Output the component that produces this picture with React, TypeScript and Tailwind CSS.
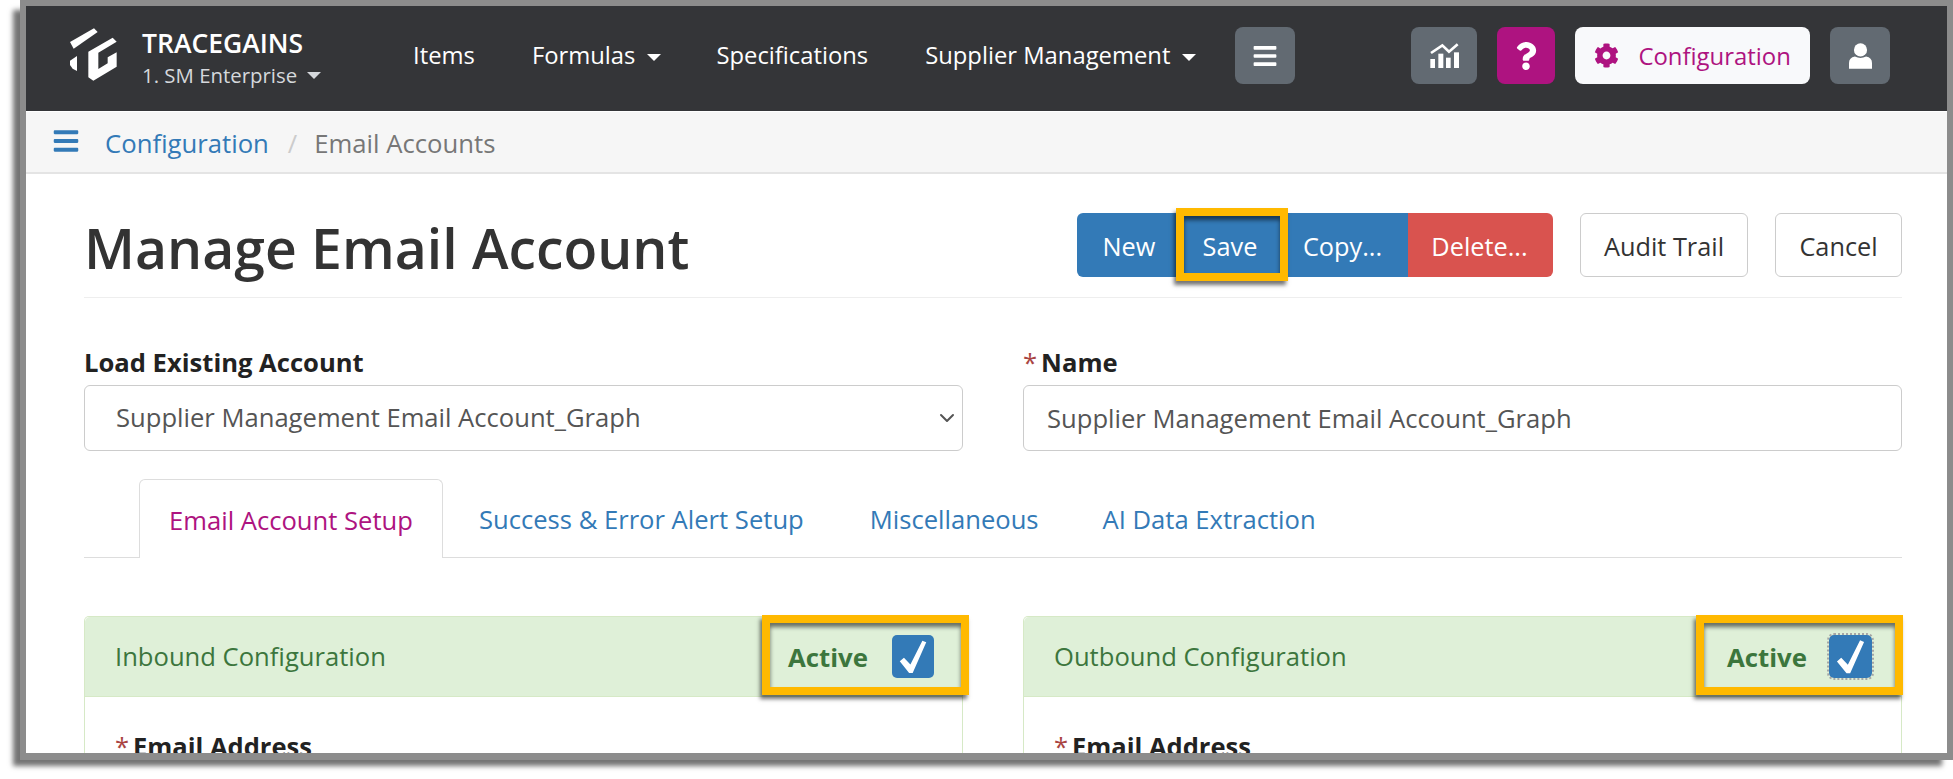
import React from 'react';
import { FaBars, FaCog, FaQuestion } from 'react-icons/fa';
import { ChevronDown } from 'lucide-react';

const Caret = ({ className }: { className?: string }) => (
  <span className={`inline-block w-0 h-0 border-x-[7px] border-x-transparent border-t-[7px] ${className}`} />
);

const Logo = () => (
  <svg viewBox="0 0 210 210" className="w-[70px] h-[70px] shrink-0 mb-[7px]" fill="#fff">
    <path d="M30 66 L102 25 L113 36 L41 86 Z" />
    <path d="M30 122 L51 108 L51 153 L38 146 L30 135 Z" />
    <path d="M85 95 L158 53 L170 65 L115 98 L115 147 L143 130 L143 112 L170 97 L170 140 L100 182 L85 172 Z" />
  </svg>
);

const ChartIcon = () => (
  <svg viewBox="0 0 87 75" className="w-[29px] h-[25px]" fill="#fff">
    <path d="M3 30 L37 7 L57 26 L83 4" fill="none" stroke="#fff" strokeWidth="8" />
    <rect x="1" y="48" width="14" height="27" />
    <rect x="25" y="32" width="15" height="43" />
    <rect x="48" y="44" width="14" height="31" />
    <rect x="72" y="28" width="15" height="47" />
  </svg>
);

const UserIcon = () => (
  <svg viewBox="0 0 70 77" className="w-[23px] h-[26px]" fill="#fff">
    <circle cx="35" cy="20" r="20" />
    <path d="M0 77 V60 Q0 43 18 40 Q35 49 52 40 Q70 43 70 60 V77 Z" />
  </svg>
);

const Check = () => (
  <svg viewBox="0 0 130 130" className="w-full h-full" fill="#fff">
    <path d="M24 80 L37 69 L57 90 L94 16 L106 21 L64 116 L53 116 Z" />
  </svg>
);

const Highlight = ({ className }: { className?: string }) => (
  <div className={`absolute border-8 border-[#ffb900] shadow-[-2px_4px_4px_rgba(0,0,0,0.55),inset_0_4px_4px_rgba(0,0,0,0.55)] pointer-events-none ${className}`} />
);

const NavLink = ({ label, caret, className }: { label: string; caret?: boolean; className?: string }) => (
  <a className={`flex items-center text-white text-[23.8px] mb-[5px] ${className}`}>
    {label}
    {caret && <Caret className="ml-[12px] mt-[3px] border-t-white" />}
  </a>
);

const Panel = ({ title, outlined, activeClass, boxClass }: { title: string; outlined?: boolean; activeClass: string; boxClass: string }) => (
  <div className="border border-[#d6e9c6] border-b-0 rounded-t-[5px] h-[200px]">
    <div className="flex items-center justify-between h-[80px] bg-[#dff0d8] border-b border-[#d6e9c6] rounded-t-[5px] pl-[30px] text-[#3c763d]">
      <span className="text-[25.6px] pt-[1px]">{title}</span>
      <div className={`relative flex items-center h-[80px] ${activeClass}`}>
        <span className="text-[25.8px] font-bold pt-[1px]">Active</span>
        <span className={`h-[43px] bg-[#337ab7] rounded-[5px] ${boxClass} ${outlined ? 'outline-2 outline-dotted outline-[#a5a5a5]' : ''}`}>
          <Check />
        </span>
        <Highlight className={`top-[-2px] bottom-[2px] ${outlined ? 'left-[-31px] right-[-2px]' : 'left-[-26px] right-[-7px]'}`} />
      </div>
    </div>
    <div className="pl-[30px] pt-[30px] text-[25.5px] font-bold text-[#222]">
      <span className="text-[#a94442] font-normal mr-[4px]">*</span>Email Address
    </div>
  </div>
);

export default function App() {
  return (
    <div className="w-[1953px] h-[779px] bg-white overflow-hidden pl-[20px] font-['Open_Sans','Noto_Sans',sans-serif]">
      <div className="h-[760px] border-[#8c8c8c] border-l-[6px] border-t-[6px] border-r-[6px] border-b-[7px] shadow-[-9px_8px_5px_-2px_rgba(0,0,0,0.55)] bg-white overflow-hidden">
        {/* top bar */}
        <header className="flex items-center h-[105px] bg-[#343538] pl-[34px]">
          <Logo />
          <div className="w-[271px] ml-[12px] shrink-0">
            <div className="text-white text-[26.5px] font-semibold leading-[32px]">TRACEGAINS</div>
            <div className="flex items-center text-[#d5d8dc] text-[20.4px] leading-[32px]">
              1. SM Enterprise
              <Caret className="ml-[10px] mt-[2px] border-t-[#d5d8dc]" />
            </div>
          </div>
          <NavLink label="Items" />
          <NavLink label="Formulas" caret className="ml-[57px]" />
          <NavLink label="Specifications" className="ml-[55px]" />
          <NavLink label="Supplier Management" caret className="ml-[57px]" />
          <button className="flex items-center justify-center w-[60px] h-[57px] ml-[39px] mb-[6px] bg-[#626a72] rounded-[8px] text-white">
            <FaBars size={26} />
          </button>
          <button className="flex items-center justify-center w-[66px] h-[57px] ml-[116px] mb-[6px] bg-[#626a72] rounded-[8px]">
            <ChartIcon />
          </button>
          <button className="flex items-center justify-center w-[58px] h-[57px] ml-[20px] mb-[6px] bg-[#ae1380] rounded-[8px] text-white">
            <FaQuestion size={28} />
          </button>
          <button className="flex items-center w-[235px] h-[57px] ml-[20px] mb-[6px] pl-[19px] bg-[#f8f9fb] rounded-[8px] text-[#ae1380] text-[23.9px]">
            <FaCog size={25} />
            <span className="ml-[19px]">Configuration</span>
          </button>
          <button className="flex items-center justify-center w-[60px] h-[57px] ml-[20px] mb-[6px] bg-[#626a72] rounded-[8px]">
            <UserIcon />
          </button>
        </header>

        {/* breadcrumb */}
        <nav className="flex items-center h-[62px] mt-px bg-[#f6f6f6] border-b-2 border-[#e4e4e4] pl-[26px] text-[25.7px]">
          <FaBars size={28} className="text-[#337ab7] mb-[2px]" />
          <a className="ml-[25px] pt-[5px] text-[#337ab7]">Configuration</a>
          <span className="ml-[19px] pt-[5px] text-[#ccc]">/</span>
          <span className="ml-[17px] pt-[5px] text-[#777]">Email Accounts</span>
        </nav>

        <main className="pl-[58px] pr-[45px]">
          {/* title row */}
          <div className="flex items-center justify-between pt-[39px] pb-[20px] border-b border-[#eee]">
            <h1 className="h-[64px] text-[55.3px] font-semibold leading-[64px] pt-[3px] text-[#333]">Manage Email Account</h1>
            <div className="flex items-center text-[25.3px]">
              <div className="flex h-[64px] text-white">
                <button className="w-[104px] pt-[4px] bg-[#337ab7] rounded-l-[6px]">New</button>
                <button className="relative w-[102px] pt-[4px] pr-[4px] bg-[#337ab7]">
                  Save
                  <Highlight className="inset-x-[-5px] top-[-5px] bottom-[-4px]" />
                </button>
                <button className="w-[125px] pt-[4px] pr-[6px] bg-[#337ab7]">Copy...</button>
                <button className="w-[145px] pt-[4px] pr-[2px] bg-[#d9534f] rounded-r-[6px]">Delete...</button>
              </div>
              <button className="w-[168px] h-[64px] ml-[27px] pt-[4px] bg-white border border-[#ccc] rounded-[6px] text-[#333]">Audit Trail</button>
              <button className="w-[127px] h-[64px] ml-[27px] pt-[4px] bg-white border border-[#ccc] rounded-[6px] text-[#333]">Cancel</button>
            </div>
          </div>

          {/* account and name */}
          <div className="grid grid-cols-2 gap-x-[60px] mt-[49px] text-[25.6px]">
            <div>
              <label className="block font-bold leading-[32px] text-[#222] mb-[6px]">Load Existing Account</label>
              <div className="relative">
                <select defaultValue="a" className="w-full h-[66px] appearance-none bg-white border border-[#ccc] rounded-[6px] pl-[31px] text-[#555]">
                  <option value="a">Supplier Management Email Account_Graph</option>
                </select>
                <ChevronDown size={24} className="absolute right-[4px] top-[21px] text-[#555]" />
              </div>
            </div>
            <div>
              <label className="block font-bold leading-[32px] text-[#222] mb-[6px]">
                <span className="text-[#a94442] font-normal mr-[4px]">*</span>Name
              </label>
              <input readOnly value="Supplier Management Email Account_Graph" className="w-full h-[66px] bg-white border border-[#ccc] rounded-[6px] pl-[23px] text-[#555]" />
            </div>
          </div>

          {/* tabs */}
          <div className="flex h-[79px] mt-[28px] pl-[55px] border-b border-[#ddd] text-[25.6px]">
            <a className="flex items-center justify-center w-[304px] h-[79px] pt-[4px] bg-white border border-b-0 border-[#ddd] rounded-t-[6px] text-[#ae1380]">Email Account Setup</a>
            <a className="flex items-center ml-[36px] pt-[4px] text-[#337ab7]">Success &amp; Error Alert Setup</a>
            <a className="flex items-center ml-[66px] pt-[4px] text-[#337ab7]">Miscellaneous</a>
            <a className="flex items-center ml-[64px] pt-[4px] text-[#337ab7]">AI Data Extraction</a>
          </div>

          {/* config panels */}
          <div className="grid grid-cols-2 gap-x-[60px] mt-[58px]">
            <Panel title="Inbound Configuration" activeClass="pr-[28px]" boxClass="w-[42px] ml-[24px]" />
            <Panel title="Outbound Configuration" outlined activeClass="pr-[29px]" boxClass="w-[43px] ml-[22px]" />
          </div>
        </main>
      </div>
    </div>
  );
}
